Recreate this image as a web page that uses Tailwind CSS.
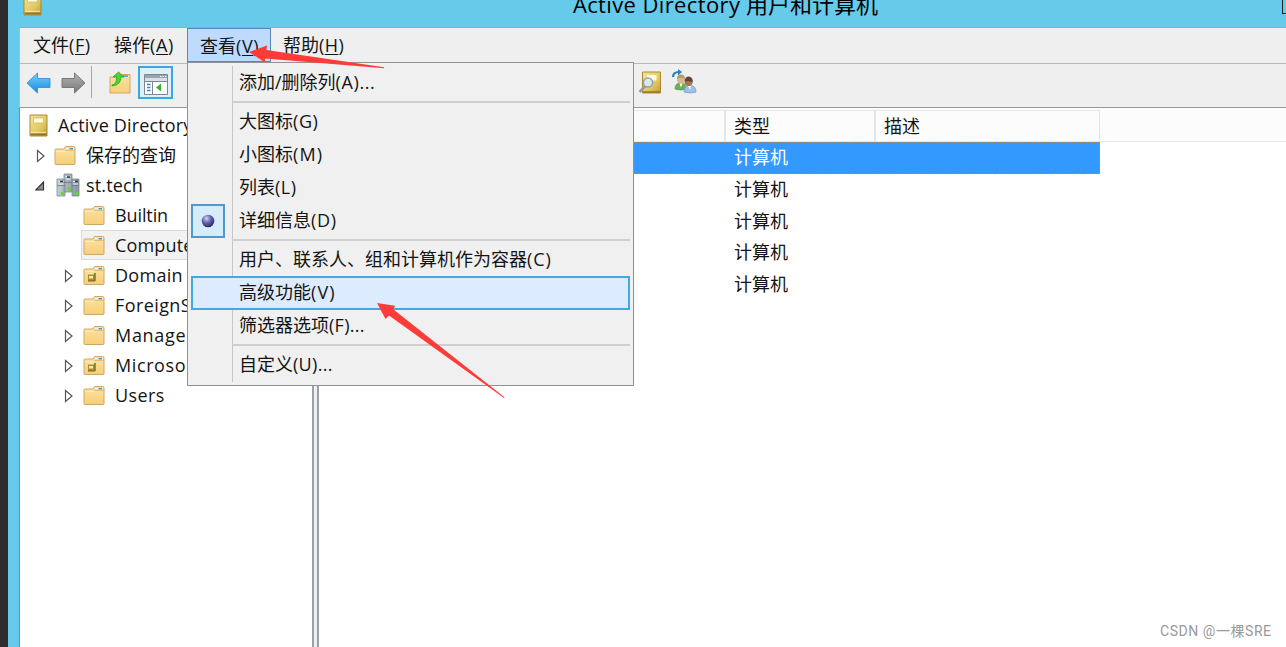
<!DOCTYPE html>
<html lang="zh-CN">
<head>
<meta charset="utf-8">
<title>Active Directory 用户和计算机</title>
<script src="https://cdn.jsdelivr.net/npm/@tailwindcss/browser@4"></script>
</head>
<body class="w-[1286px] h-[647px] overflow-hidden relative flex bg-[#66caea] text-[18px] leading-none text-[#141414] whitespace-nowrap font-['Open_Sans','Noto_Sans_CJK_SC',sans-serif]">
<svg class="absolute w-0 h-0">
  <defs>
    <linearGradient id="gf" x1="0" y1="0" x2="0" y2="1"><stop offset="0" stop-color="#fbe3a4"/><stop offset="1" stop-color="#f7cf78"/></linearGradient>
    <linearGradient id="gb" x1="0" y1="0" x2="1" y2="1"><stop offset="0" stop-color="#f3e59c"/><stop offset=".6" stop-color="#e2c95f"/><stop offset="1" stop-color="#c09b35"/></linearGradient>
    <linearGradient id="gs" x1="0" y1="0" x2="1" y2="0"><stop offset="0" stop-color="#c3ccd4"/><stop offset="1" stop-color="#8795a2"/></linearGradient>
    <linearGradient id="ga" x1="0" y1="0" x2="0" y2="1"><stop offset="0" stop-color="#7fd0fa"/><stop offset="1" stop-color="#0d8be0"/></linearGradient>
    <linearGradient id="gg" x1="0" y1="0" x2="0" y2="1"><stop offset="0" stop-color="#b5b5b5"/><stop offset="1" stop-color="#777"/></linearGradient>
    <radialGradient id="gd" cx=".38" cy=".3" r=".7"><stop offset="0" stop-color="#d3d3f6"/><stop offset=".5" stop-color="#6464b0"/><stop offset="1" stop-color="#2d2d6c"/></radialGradient>
    <symbol id="folder" viewBox="0 0 22 21"><path d="M1 5.5V4.7q0-.7.7-.7H10l1.500-2.500H19.500q1.500 0 1.500 1.500V18.500q0 1-1 1H2q-1 0-1-1z" fill="url(#gf)" stroke="#cfa765" stroke-width="1"/><path d="M12 3h8v2h-9z" fill="#fff3cf"/><path d="M15.500 3.800h3.500" stroke="#3197e8" stroke-width="1.600"/><path d="M2 6.500H11l1.500-1.300H20" stroke="#fbecc0" fill="none"/><path d="M11 5.200h9.500" stroke="#c9a15d" stroke-width=".8"/></symbol>
    <symbol id="ou" viewBox="0 0 22 21"><use href="#folder"/><path d="M5 8h7.500v8H5z" fill="#a88d35"/><path d="M5 8h6v1.500H5zM6 11h4v2.500H6z" fill="#f5e9a5"/><path d="M12 8v8H5" stroke="#776422" fill="none"/></symbol>
    <symbol id="book" viewBox="0 0 19 23"><path d="M1 1h17v21H1z" fill="url(#gb)" stroke="#a98b35"/><path d="M1.500 19.500h16v2h-16z" fill="#957426"/><path d="M2 18.300h15" stroke="#f6ebae"/><path d="M4.500 4h10v5h-10z" fill="#fffbe0" stroke="#d2bb63" stroke-width=".8"/></symbol>
    <symbol id="server" viewBox="0 0 24 24"><path d="M8 1h8v18H8zM1 6h8v17H1zM16 6h7v17h-7z" fill="url(#gs)" stroke="#7f8b96" stroke-width=".8"/><path d="M9.500 3.500h5M9.500 6h5M2.500 8.500h5M2.500 11h5M17 8.500h5M17 11h5" stroke="#e9eef2"/><path d="M11 4h3M4 8.500h3M19 8.500h3" stroke="#303a43" stroke-width="1.300"/><path d="M1 12.500h8M16 12.500h7M8 9.500h8" stroke="#697682" stroke-width=".8"/><circle cx="13" cy="16" r="1.700" fill="#58e01c"/><circle cx="6.500" cy="20.500" r="1.700" fill="#58e01c"/><circle cx="21" cy="20.500" r="1.700" fill="#58e01c"/></symbol>
    <symbol id="closed" viewBox="0 0 10 14"><path d="M1.500 1.500L8 7L1.500 12.500z" fill="#fff" stroke="#555" stroke-width="1.200"/></symbol>
    <symbol id="open" viewBox="0 0 10 10"><path d="M8.500 1v8H.8z" fill="#909090" stroke="#333" stroke-width="1.200"/></symbol>
    <symbol id="arrow" viewBox="0 0 26 22"><path d="M1 11L11.500 1v5.500H24v9H11.500V21z"/></symbol>
  </defs>
</svg>

<div class="w-2 h-full shrink-0 bg-[#2d2d2d]"></div>
<div class="w-[11px] h-full shrink-0"></div>

<div class="flex-1 flex flex-col min-w-0">
  <header class="h-7 shrink-0 border-b border-[#93adb9] flex justify-between items-end">
    <svg class="w-[19px] h-[23px] ml-1 mb-[11px]"><use href="#book"/></svg>
    <div class="text-[22px] text-black h-[33px] leading-[33px] mb-[6px] ml-[127px]"><span class="tracking-[0.38px]">Active Directory</span> 用户和计算机</div>
    <div class="w-1 h-[14px] border-l border-b border-[#222] mb-[13px]"></div>
  </header>

  <nav class="h-9 shrink-0 bg-[#efefef] border-l border-b border-[#b9b9b9] flex">
    <div class="w-[81px] h-[34px] pl-[13px] leading-[34px]">文件<span class="tracking-[0.6px]">(<u class="underline-offset-2">F</u>)</span></div>
    <div class="w-[86px] h-[34px] pl-[13px] leading-[34px]">操作<span class="tracking-[0.7px]">(<u class="underline-offset-2">A</u>)</span></div>
    <div class="w-[84px] h-[34px] pl-[12px] leading-[34px] bg-[#bfdaff] border border-[#5b87b4]">查看<span class="tracking-[0.6px]">(<u class="underline-offset-2">V</u>)</span></div>
    <div class="h-[34px] pl-[12px] leading-[34px]">帮助<span class="tracking-[0.4px]">(<u class="underline-offset-2">H</u>)</span></div>
  </nav>

  <div class="h-11 shrink-0 bg-[#efefef] border-l border-b border-l-[#b9b9b9] border-b-[#9299a5] flex items-start">
    <svg class="w-[26px] h-[22px] ml-[6px] mt-[8px]" fill="url(#ga)" stroke="#3a9be0"><use href="#arrow"/></svg>
    <svg class="w-[26px] h-[22px] ml-[8px] mt-[8px] -scale-x-100" fill="url(#gg)" stroke="#777"><use href="#arrow"/></svg>
    <div class="w-px h-8 ml-[5px] mt-[2px] bg-[#a5a5a5]"></div>
    <svg class="w-[22px] h-[23px] ml-[17px] mt-[7px]" viewBox="0 0 22 23"><path d="M1 6h9l2-2.500h9V22H1z" fill="url(#gf)" stroke="#cfa765"/><path d="M14 5h5" stroke="#3197e8" stroke-width="1.400"/><path d="M3 14Q8 13 7.500 6H4L9.500 1L15 6H12Q12 14 3 15z" fill="#4fd133" stroke="#2fa31b" stroke-width=".8"/></svg>
    <div class="w-[35px] h-[33px] ml-[7px] mt-[2px] border-2 border-[#3ca7e4] bg-[#e0effc] flex items-center justify-center">
      <svg class="w-6 h-[21px] mt-[3px]" viewBox="0 0 24 21"><path d="M.5 .5h23v20H.5z" fill="#fff" stroke="#7c8794"/><path d="M1 1h22v3H1z" fill="#9aa4b1"/><path d="M1 4h22v3H1z" fill="#dce0e6"/><path d="M16 2.500h1.500M18.500 2.500H20M21 2.500h1.500" stroke="#fff"/><path d="M1 7.500h22M8.500 7.500V20" stroke="#7c8794"/><path d="M3 10.500h3.500M3 13.500h3.500M3 16.500h3.500" stroke="#3c82c8" stroke-width="1.300"/><path d="M17 9.500v8L12 13.500z" fill="#34b526"/></svg>
    </div>
    <svg class="w-6 h-6 ml-[465px] mt-[7px]" viewBox="0 0 24 24"><path d="M4.500 1h18v21h-18z" fill="url(#gb)" stroke="#a98b35"/><path d="M9 4h9.500v5.500H9z" fill="#fffbe0"/><path d="M5 21h17" stroke="#957426" stroke-width="1.500"/><path d="M7.500 15L1.500 21" stroke="#9a9a9a" stroke-width="2.500"/><circle cx="10" cy="11.500" r="4.600" fill="#d7ebf7" fill-opacity=".9" stroke="#8ba2b3" stroke-width="1.500"/></svg>
    <svg class="w-[26px] h-[26px] ml-[9px] mt-[5px]" viewBox="0 0 26 26"><path d="M2 8Q2 3 8 3" fill="none" stroke="#2e7fbe" stroke-width="2.200"/><path d="M7 0l4 3-4 3.500z" fill="#2e7fbe"/><path d="M4 20q0-6 5.500-6T15 20q-5 2-11 0z" fill="#6bb052" stroke="#4f9440" stroke-width=".7"/><circle cx="10" cy="10.500" r="4" fill="#d9b68c"/><path d="M6 10q0-4.500 4-4.500t4 4.500q-4-2.500-8 0z" fill="#b39a63"/><path d="M13 23q0-6.500 6-6.500t6 6.500q-6 2-12 0z" fill="#9dbfe9" stroke="#6f94c6" stroke-width=".7"/><circle cx="17.500" cy="13" r="4" fill="#a8754f"/><path d="M14 12.500q-.5-5 4-5 4.500 1 3.500 6-3-2.500-7.500-1z" fill="#5d4638"/><path d="M8.500 14.500l1.500 4 1.500-4zM17 17l2 4 1-4z" fill="#fff"/></svg>
  </div>

  <main class="flex-1 min-h-0 flex bg-white border-l border-[#828790]">
    <aside class="w-[292px] shrink-0 pt-[2px] tracking-[0.15px]">
      <div class="h-[30px] flex items-center pl-[9px]"><svg class="w-[19px] h-[23px] mr-[10px]"><use href="#book"/></svg>Active Directory</div>
      <div class="h-[30px] flex items-center pl-[16px]"><svg class="w-[10px] h-[14px] mr-[8px] mt-[2px]"><use href="#closed"/></svg><svg class="w-[22px] h-[21px] mr-[10px]"><use href="#folder"/></svg><span class="tracking-normal">保存的查询</span></div>
      <div class="h-[30px] flex items-center pl-[15px]"><svg class="w-[10px] h-[10px] mr-[11px] mt-[1px]"><use href="#open"/></svg><svg class="w-6 h-6 mr-[6px]"><use href="#server"/></svg>st.tech</div>
      <div class="h-[30px] flex items-center pl-[63px]"><svg class="w-[22px] h-[21px] mr-[10px]"><use href="#folder"/></svg><span class="tracking-[-0.1px]">Builtin</span></div>
      <div class="h-[30px] ml-[61px] w-[150px] flex items-center pl-px border border-[#d9d9d9] bg-[#f2f2f2]"><svg class="w-[22px] h-[21px] mr-[10px]"><use href="#folder"/></svg>Computers</div>
      <div class="h-[30px] flex items-center pl-[44px]"><svg class="w-[10px] h-[14px] mr-[9px] mt-[2px]"><use href="#closed"/></svg><svg class="w-[22px] h-[21px] mr-[10px]"><use href="#ou"/></svg><span class="tracking-[0.3px]">Domain</span></div>
      <div class="h-[30px] flex items-center pl-[44px]"><svg class="w-[10px] h-[14px] mr-[9px] mt-[2px]"><use href="#closed"/></svg><svg class="w-[22px] h-[21px] mr-[10px]"><use href="#folder"/></svg><span class="tracking-[0.4px]">ForeignS</span></div>
      <div class="h-[30px] flex items-center pl-[44px]"><svg class="w-[10px] h-[14px] mr-[9px] mt-[2px]"><use href="#closed"/></svg><svg class="w-[22px] h-[21px] mr-[10px]"><use href="#folder"/></svg><span class="tracking-[0.7px]">Manage</span></div>
      <div class="h-[30px] flex items-center pl-[44px]"><svg class="w-[10px] h-[14px] mr-[9px] mt-[2px]"><use href="#closed"/></svg><svg class="w-[22px] h-[21px] mr-[10px]"><use href="#ou"/></svg><span class="tracking-[0.6px]">Microso</span></div>
      <div class="h-[30px] flex items-center pl-[44px]"><svg class="w-[10px] h-[14px] mr-[9px] mt-[2px]"><use href="#closed"/></svg><svg class="w-[22px] h-[21px] mr-[10px]"><use href="#folder"/></svg><span class="tracking-[0.4px]">Users</span></div>
    </aside>
    <div class="w-[7px] shrink-0 bg-[#efefef] border-x-2 border-[#9ba0a9]"></div>
    <section class="flex-1 min-w-0">
      <div class="h-[34px] pt-[2px] flex bg-[#fcfcfc] border-b border-[#e8e8e8]">
        <div class="w-[407px] border-r-2 border-t border-[#e5e5e5]"></div>
        <div class="w-[150px] border-r-2 border-t border-[#e5e5e5] pl-2 leading-[31px]">类型</div>
        <div class="w-[224px] border-r border-t border-[#e5e5e5] pl-2 leading-[31px]">描述</div>
      </div>
      <div class="w-[781px] h-[32px] bg-[#3399ff] border border-dashed border-[#b98546] text-white pl-[414px] leading-[29px]">计算机</div>
      <div class="h-[32px] pl-[415px] leading-[31px]">计算机</div>
      <div class="h-[31px] pl-[415px] leading-[31px]">计算机</div>
      <div class="h-[32px] pl-[415px] leading-[31px]">计算机</div>
      <div class="h-[31px] pl-[415px] leading-[31px]">计算机</div>
    </section>
  </main>
</div>

<div class="absolute left-[187px] top-[62px] w-[447px] h-[324px] bg-[#f0f0f0] border border-[#929292] p-[3px]">
  <div class="absolute left-[44px] top-[3px] bottom-[3px] w-px bg-[#c6c6c6]"></div>
  <div class="relative flex flex-col">
    <div class="h-[33px] pl-12 leading-[33px]">添加/删除列<span class="tracking-[0.6px]">(A)...</span></div>
    <div class="h-[6px] pl-[41px] flex items-center"><div class="h-[2px] w-full bg-[#cecece]"></div></div>
    <div class="h-[33px] pl-12 leading-[33px]">大图标<span class="tracking-[0.6px]">(G)</span></div>
    <div class="h-[33px] pl-12 leading-[33px]">小图标<span class="tracking-[1.1px]">(M)</span></div>
    <div class="h-[33px] pl-12 leading-[33px]">列表<span class="tracking-[0.5px]">(L)</span></div>
    <div class="h-[33px] flex leading-[33px]">
      <div class="w-[34px] h-[34px] bg-[#d6ecfb] border-2 border-[#5199ca] flex items-center justify-center mr-[14px]"><svg class="w-[14px] h-[14px]"><circle cx="7" cy="7" r="6.300" fill="url(#gd)"/></svg></div>详细信息<span class="tracking-[0.7px]">(D)</span></div>
    <div class="h-[6px] pl-[41px] flex items-center"><div class="h-[2px] w-full bg-[#cecece]"></div></div>
    <div class="h-[33px] pl-12 leading-[33px]">用户、联系人、组和计算机作为容器<span class="tracking-[0.9px]">(C)</span></div>
    <div class="h-[34px] -mb-px pl-[46px] leading-[29px] bg-[#dcebfd] border-2 border-[#3fa9e1]">高级功能<span class="tracking-[1.1px]">(V)</span></div>
    <div class="h-[33px] pl-12 leading-[33px]">筛选器选项<span class="tracking-[0.3px]">(F)...</span></div>
    <div class="h-[6px] pl-[41px] flex items-center"><div class="h-[2px] w-full bg-[#cecece]"></div></div>
    <div class="h-[33px] pl-12 leading-[33px]">自定义<span class="tracking-[0.3px]">(U)...</span></div>
  </div>
</div>

<svg class="absolute inset-0 w-full h-full" viewBox="0 0 1286 647" fill="#fd3c3a"><path d="M249 52L267 45.500L266.500 50L384 67.300V68.200L265 58.500L265 62.500z"/><path d="M377 303L395 305.800L393.500 309.500L504.500 397.300L504 398L389 315.500L385.500 319z"/></svg>
<div class="absolute left-[1160px] top-[622px] text-[14px] leading-[18px] tracking-[0.55px] text-[#999] font-['Roboto','Noto_Sans_CJK_SC',sans-serif]">CSDN @一棵SRE</div>
</body>
</html>
